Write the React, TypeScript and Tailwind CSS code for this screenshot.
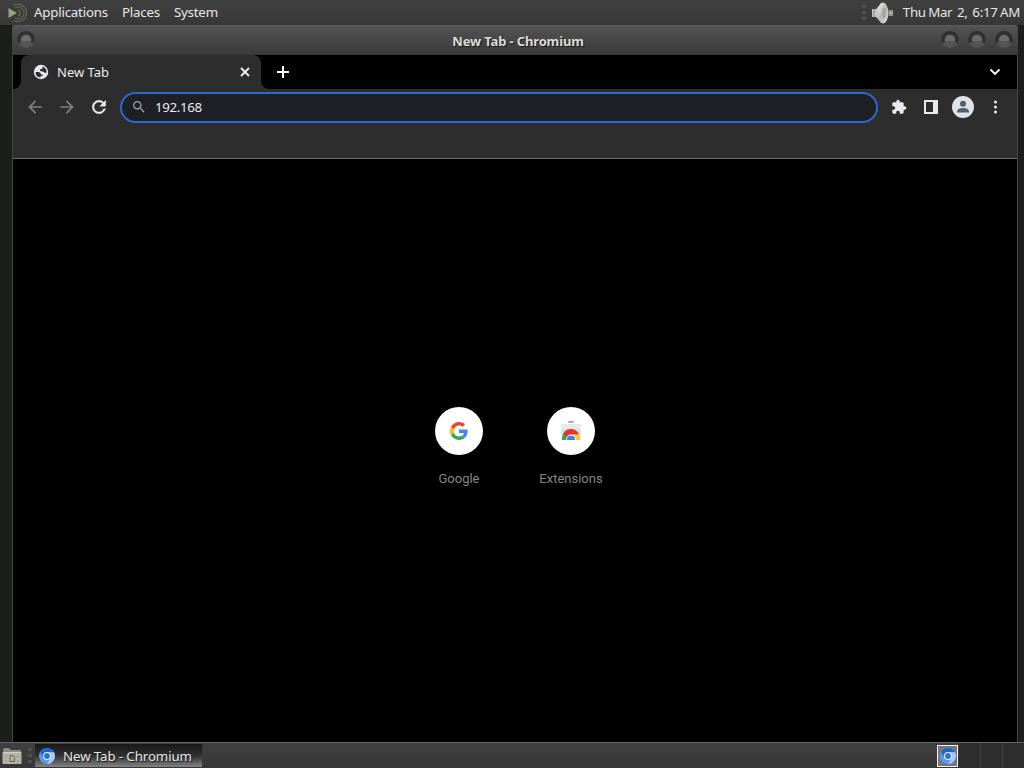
import React from 'react';

interface IconProps {
  className?: string;
}

const MateLogo: React.FC<IconProps> = ({ className }) => (
  <svg className={className} viewBox="0 0 20 20" fill="none">
    <path d="M5 2.6 A8.8 8.8 0 1 1 5 17.4" stroke="#66704f" strokeWidth="1.1" />
    <path d="M7 5 A5.9 5.9 0 1 1 7 15" stroke="#5f694a" strokeWidth="1.1" />
    <path d="M10 7 A3.1 3.1 0 0 1 10 13" stroke="#66704f" strokeWidth="1.1" />
    <path d="M0.5 5 L9 10 L0.5 15 Z" fill="#8fa876" />
  </svg>
);

const SpeakerIcon: React.FC<IconProps> = ({ className }) => (
  <svg className={className} viewBox="0 0 24 24">
    <defs>
      <linearGradient id="cone" x1="0" x2="1" y1="0" y2="1">
        <stop offset="0" stopColor="#f5f5f3" />
        <stop offset="0.5" stopColor="#b5b5b2" />
        <stop offset="1" stopColor="#dededb" />
      </linearGradient>
    </defs>
    <path d="M1 8 L5 8 L11 1.5 L11 22.5 L5 16 L1 16 Z" fill="#c4c4c1" />
    <path d="M3 8 V16" stroke="#8a8a87" />
    <ellipse cx="12" cy="12" rx="5.4" ry="10.5" fill="url(#cone)" />
    <ellipse cx="13" cy="12" rx="1.8" ry="5" fill="#a3a3a0" />
    <path d="M17.5 9 H22 V15 H17.5 Z" fill="#92928f" />
    <path d="M18 12 H22" stroke="#b8b8b5" strokeWidth="1.4" />
  </svg>
);

const ChromiumIcon: React.FC<IconProps> = ({ className }) => (
  <svg className={className} viewBox="0 0 16 16">
    <circle cx="8" cy="8" r="8" fill="#5a98f2" />
    <path d="M8 0 A8 8 0 0 1 15 4.2 L8 4.2 L4.6 10 L1.1 4 A8 8 0 0 1 8 0 Z" fill="#1f66c8" />
    <path d="M15 4.2 A8 8 0 0 1 8 16 L11.5 10 L11 5 L8 4.2 Z" fill="#a6c8f8" />
    <circle cx="8" cy="8" r="4" fill="#e9f1fc" />
    <circle cx="8" cy="8" r="2.9" fill="#2673d9" />
  </svg>
);

const FolderIcon: React.FC<IconProps> = ({ className }) => (
  <svg className={className} viewBox="0 0 20 18">
    <path d="M1 3 Q1 1 3 1 H7 L8.5 3 H18 Q19 3 19 4 V16 H1 Z" fill="#8d8d80" />
    <rect x="0.5" y="5" width="19" height="12" rx="1" fill="#b4b4a6" />
    <path d="M1 5.5 H19" stroke="#d0d0c3" />
    <path d="M8 8.5 H11 L12.5 10 V14.5 H8 Z" fill="none" stroke="#64645c" />
    <path d="M3 9 H5 M3 13.5 H5 M15 9.5 H17 M15 14 H17" stroke="#999a8d" strokeWidth="1.2" />
  </svg>
);

const GlobeIcon: React.FC<IconProps> = ({ className }) => (
  <svg className={className} viewBox="0 0 16 16">
    <circle cx="8" cy="8" r="7.2" fill="#e8eaed" />
    <path d="M2.5 8 H5.6 Q8 8.2 8 10.4 H9.6 V12 H7.6 V13.6 A5.8 5.8 0 0 1 2.5 8 Z" fill="#2d2d2d" />
    <path d="M9.4 2.4 A5.8 5.8 0 0 1 13.5 8.6 Q12.6 9.2 11.4 8.6 Q10.8 7.4 9.4 7.4 L7.2 7 V5 H9.4 Z" fill="#2d2d2d" />
  </svg>
);

const GoogleIcon: React.FC<IconProps> = ({ className }) => (
  <svg className={className} viewBox="0 0 48 48">
    <path fill="#EA4335" d="M24 9.5c3.54 0 6.71 1.22 9.21 3.6l6.85-6.85C35.9 2.38 30.47 0 24 0 14.62 0 6.51 5.38 2.56 13.22l7.98 6.19C12.43 13.72 17.74 9.5 24 9.5z" />
    <path fill="#4285F4" d="M46.98 24.55c0-1.57-.15-3.09-.38-4.55H24v9.02h12.94c-.58 2.96-2.26 5.48-4.78 7.18l7.73 6c4.51-4.18 7.09-10.36 7.09-17.65z" />
    <path fill="#FBBC05" d="M10.53 28.59c-.48-1.45-.76-2.99-.76-4.59s.27-3.14.76-4.59l-7.98-6.19C.92 16.46 0 20.12 0 24c0 3.88.92 7.54 2.56 10.78l7.97-6.19z" />
    <path fill="#34A853" d="M24 48c6.48 0 11.93-2.13 15.89-5.81l-7.73-6c-2.15 1.45-4.92 2.3-8.16 2.3-6.26 0-11.57-4.22-13.47-9.91l-7.98 6.19C6.51 42.62 14.62 48 24 48z" />
  </svg>
);

const WebStoreIcon: React.FC<IconProps> = ({ className }) => (
  <svg className={className} viewBox="0 0 20 20">
    <rect x="7" y="0" width="6" height="1.8" rx="0.9" fill="#9c9fa2" />
    <path d="M0.5 3 H19.5 V19 H0.5 Z" fill="#dcdddd" />
    <path d="M0.5 3 H19.5 V8 H0.5 Z" fill="#e8e8e8" />
    <path d="M1 19 V17 Q1.1 14 3 11.8 L7.5 19 Z" fill="#2da94f" />
    <path d="M2.4 12.4 A8.6 8.6 0 0 1 17.6 12.6 L18 13.8 H10 L6 16.8 Z" fill="#dc3a2d" />
    <path d="M12.4 13.6 H18.2 Q19.2 16 19.2 19 H12.4 Z" fill="#fcc934" />
    <path d="M5.2 19 V18.4 A4.8 4.8 0 0 1 14.8 18.4 V19 Z" fill="#fff" />
    <path d="M6 19 V18.4 A4 4 0 0 1 14 18.4 V19 Z" fill="#3f80ea" />
  </svg>
);

const ToolbarIcon: React.FC<{ d: string; className?: string }> = ({ d, className }) => (
  <svg className={className} viewBox="0 0 24 24" fill="currentColor">
    <path d={d} />
  </svg>
);

const icons = {
  back: 'M20 11H7.83l5.59-5.59L12 4l-8 8 8 8 1.41-1.41L7.83 13H20v-2z',
  forward: 'M12 4l-1.41 1.41L16.17 11H4v2h12.17l-5.58 5.59L12 20l8-8z',
  reload:
    'M17.65 6.35C16.2 4.9 14.21 4 12 4c-4.42 0-7.99 3.58-7.99 8s3.57 8 7.99 8c3.73 0 6.84-2.55 7.73-6h-2.08c-.82 2.33-3.04 4-5.65 4-3.31 0-6-2.69-6-6s2.69-6 6-6c1.66 0 3.14.69 4.22 1.78L13 11h7V4l-2.35 2.35z',
  search:
    'M15.5 14h-.79l-.28-.27C15.41 12.59 16 11.11 16 9.5 16 5.91 13.09 3 9.5 3S3 5.91 3 9.5 5.91 16 9.5 16c1.61 0 3.09-.59 4.23-1.57l.27.28v.79l5 4.99L20.49 19l-4.99-5zm-6 0C7.01 14 5 11.99 5 9.5S7.01 5 9.5 5 14 7.01 14 9.5 11.99 14 9.5 14z',
  extension:
    'M20.5 11H19V7c0-1.1-.9-2-2-2h-4V3.5C13 2.12 11.88 1 10.5 1S8 2.12 8 3.5V5H4c-1.1 0-1.99.9-1.99 2v3.8H3.5c1.49 0 2.7 1.21 2.7 2.7s-1.21 2.7-2.7 2.7H2V20c0 1.1.9 2 2 2h3.8v-1.5c0-1.49 1.21-2.7 2.7-2.7 1.49 0 2.7 1.21 2.7 2.7V22H17c1.1 0 2-.9 2-2v-4h1.5c1.38 0 2.5-1.12 2.5-2.5S21.88 11 20.5 11z',
};

const WindowButton = () => (
  <svg className="size-5" viewBox="0 0 20 20">
    <circle cx="10" cy="10" r="8" fill="#444" />
    <path d="M3.2 13 A7.2 7.2 0 1 1 16.8 13" fill="none" stroke="#303030" strokeWidth="3" />
    <path d="M3.6 14.4 A7.6 7.6 0 0 0 16.4 14.4" fill="none" stroke="#5e5e5e" strokeWidth="1.4" />
    <circle cx="10" cy="11" r="5" fill="#6c6c6c" />
    <path d="M5 12 A5 5 0 0 0 15 12 Z" fill="#575757" />
  </svg>
);

const Grip = () => (
  <div className="flex flex-col gap-[3px]">
    <span className="h-[3px] w-[4px] bg-[#505050]" />
    <span className="h-[3px] w-[4px] bg-[#505050]" />
    <span className="h-[3px] w-[4px] bg-[#505050]" />
  </div>
);

const TopPanel = () => (
  <header className="flex h-[25px] items-center bg-linear-to-b from-[#404040] to-[#383838] pl-2 pr-[4px] text-[13.33px] tracking-[-0.22px] text-[#e6e6e6]">
    <MateLogo className="mr-[6px] size-5" />
    <nav className="flex gap-[14px]">
      <span>Applications</span>
      <span>Places</span>
      <span>System</span>
    </nav>
    <div className="ml-auto flex items-center">
      <Grip />
      <SpeakerIcon className="ml-[5px] size-6" />
      <span className="ml-[8px] whitespace-pre tracking-[-0.3px] [word-spacing:-0.8px]">Thu Mar  2,  6:17 AM</span>
    </div>
  </header>
);

const TitleBar = () => (
  <div className="flex h-[30px] items-center justify-between rounded-t-[3px] border-t border-[#5c5c5c] bg-linear-to-b from-[#535353] to-[#3a3a3a] pl-1 pr-[4px]">
    <div className="w-20 pb-[3px]">
      <WindowButton />
    </div>
    <span className="pt-[2px] text-[13px] font-bold tracking-[-0.15px] text-[#dadada] [text-shadow:1px_1px_1px_#1a1a1a]">New Tab - Chromium</span>
    <div className="flex gap-[7px] pb-[3px]">
      <WindowButton />
      <WindowButton />
      <WindowButton />
    </div>
  </div>
);

const TabStrip = () => (
  <div className="flex h-[34px] bg-black text-[#e8eaed]">
    <div className="flex w-2 bg-[#2d2d2d]">
      <div className="w-full rounded-br-lg bg-black" />
    </div>
    <div className="flex w-[240px] items-center rounded-t-lg bg-[#2d2d2d] pl-3 pr-[11px]">
      <GlobeIcon className="size-4" />
      <span className="ml-2 pt-px text-[13px]">New Tab</span>
      <svg className="ml-auto size-[10px]" viewBox="0 0 10 10" fill="none" stroke="#f1f3f4" strokeWidth="1.8">
        <path d="M1 1 L9 9 M9 1 L1 9" />
      </svg>
    </div>
    <div className="flex w-2 bg-[#2d2d2d]">
      <div className="w-full rounded-bl-lg bg-black" />
    </div>
    <div className="flex flex-1 items-center justify-between pl-2 pr-4">
      <svg className="size-3" viewBox="0 0 12 12" fill="none" stroke="#fff" strokeWidth="2">
        <path d="M6 0 V12 M0 6 H12" />
      </svg>
      <svg className="h-[8px] w-[12px]" viewBox="0 0 12 8" fill="none" stroke="#fff" strokeWidth="1.8">
        <path d="M1.5 1.5 L6 6 L10.5 1.5" />
      </svg>
    </div>
  </div>
);

const Toolbar = () => (
  <div className="h-[70px] border-b border-[#6a6a6a] bg-[#2d2d2d] pt-[3px]">
    <div className="flex h-[31px] items-center pl-3 pr-3 text-[#e8eaed]">
      <ToolbarIcon d={icons.back} className="mb-px size-5 text-[#828282]" />
      <ToolbarIcon d={icons.forward} className="mb-px ml-3 size-5 text-[#828282]" />
      <ToolbarIcon d={icons.reload} className="mb-px ml-3 size-5 stroke-current stroke-[0.5]" />
      <div className="ml-[11px] flex h-[31px] w-[758px] items-center rounded-full border-2 border-[#2b6acb] bg-[#1d2025] pl-[9px]">
        <ToolbarIcon d={icons.search} className="mb-px size-4 text-[#9aa0a6]" />
        <span className="ml-2 pt-px text-[13.33px] tracking-[-0.35px] text-[#e8eaed]">192.168</span>
      </div>
      <ToolbarIcon d={icons.extension} className="mb-px ml-[13px] size-4" />
      <svg className="mb-px ml-4 size-4" viewBox="0 0 16 16">
        <path d="M1 1 H15 V15 H1 Z M3 3 V13 H10 V3 Z" fill="#e8eaed" fillRule="evenodd" />
      </svg>
      <svg className="mb-px ml-[13px] size-[22px]" viewBox="0 0 22 22">
        <circle cx="11" cy="11" r="11" fill="#dfe3e9" />
        <circle cx="11" cy="7.8" r="3" fill="#515c6c" />
        <path d="M5 15.8 Q5 12 11 12 Q17 12 17 15.8 V16.4 H5 Z" fill="#515c6c" />
      </svg>
      <svg className="mb-px ml-[14px] size-4" viewBox="0 0 16 16" fill="#e8eaed">
        <circle cx="7.5" cy="3" r="1.5" />
        <circle cx="7.5" cy="8" r="1.5" />
        <circle cx="7.5" cy="13" r="1.5" />
      </svg>
    </div>
  </div>
);

interface ShortcutProps {
  label: string;
  children: React.ReactNode;
}

const Shortcut: React.FC<ShortcutProps> = ({ label, children }) => (
  <div className="flex w-28 flex-col items-center">
    <div className="flex size-12 items-center justify-center rounded-full bg-white">{children}</div>
    <span className="mt-[14px] font-[Roboto,sans-serif] text-[13px] leading-5 text-[#80868b]">{label}</span>
  </div>
);

const NewTabPage = () => (
  <main className="flex flex-1 justify-center bg-black pt-[248px]">
    <Shortcut label="Google">
      <GoogleIcon className="size-[18px]" />
    </Shortcut>
    <Shortcut label="Extensions">
      <WebStoreIcon className="size-5" />
    </Shortcut>
  </main>
);

const BottomPanel = () => (
  <footer className="flex h-[26px] items-center border-t border-[#666] bg-linear-to-b from-[#404040] to-[#363636] text-[13.33px] text-[#e6e6e6]">
    <FolderIcon className="ml-[2px] h-[18px] w-5" />
    <div className="ml-[6px] mr-[3px]">
      <Grip />
    </div>
    <div className="flex h-[23px] w-[167px] items-center bg-linear-to-b from-[#181818] via-[#303030] to-[#858585] pl-1">
      <ChromiumIcon className="size-4" />
      <span className="ml-2 whitespace-nowrap pt-[2px] tracking-[-0.12px] [text-shadow:1px_1px_1px_#111]">New Tab - Chromium</span>
    </div>
    <div className="ml-auto flex h-full items-center">
      <div className="flex h-[22px] w-[21px] items-center justify-center border border-[#f0f0e8] bg-[#74777b]">
        <ChromiumIcon className="size-4" />
      </div>
      <div className="ml-[1px] h-full w-[22px] border-r border-[#444] bg-[#2d2d2d]" />
      <div className="h-full w-[22px] border-r border-[#444] bg-[#2d2d2d]" />
      <div className="h-full w-[21px] bg-[#2d2d2d]" />
    </div>
  </footer>
);

export default function App() {
  return (
    <div className="flex h-[768px] w-[1024px] flex-col overflow-hidden bg-[#1c1e1c] font-['Noto_Sans',sans-serif]">
      <TopPanel />
      <div className="ml-3 mr-[6px] flex flex-1 flex-col">
        <TitleBar />
        <div className="flex flex-1 flex-col border-x border-[#454545]">
          <TabStrip />
          <Toolbar />
          <NewTabPage />
        </div>
      </div>
      <BottomPanel />
    </div>
  );
}
